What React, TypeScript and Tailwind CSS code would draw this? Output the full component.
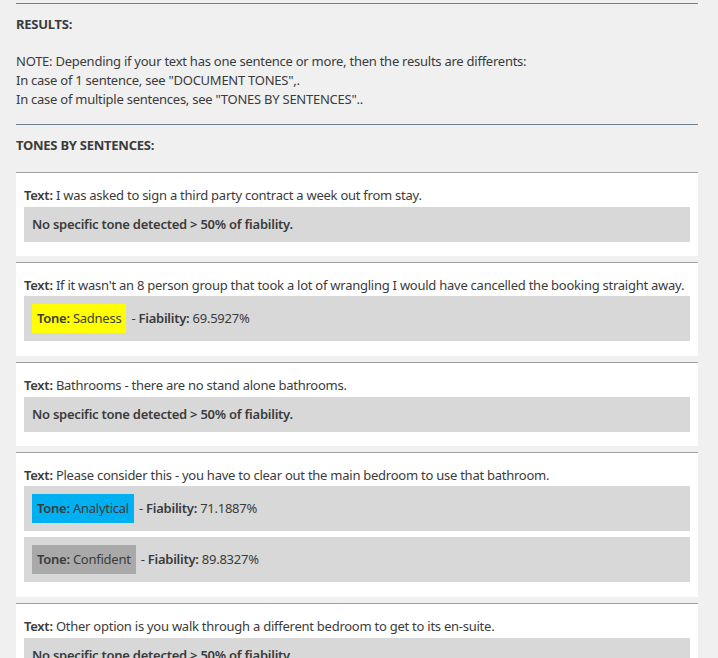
const text = '#3b3b3b'

type Tone = { name: string; score: string; color: string }

const sentences: { text: string; tones: Tone[] }[] = [
  { text: 'I was asked to sign a third party contract a week out from stay.', tones: [] },
  {
    text: "If it wasn't an 8 person group that took a lot of wrangling I would have cancelled the booking straight away.",
    tones: [{ name: 'Sadness', score: '69.5927%', color: 'bg-[#ffff00]' }],
  },
  { text: 'Bathrooms - there are no stand alone bathrooms.', tones: [] },
  {
    text: 'Please consider this - you have to clear out the main bedroom to use that bathroom.',
    tones: [
      { name: 'Analytical', score: '71.1887%', color: 'bg-[#00b0f0]' },
      { name: 'Confident', score: '89.8327%', color: 'bg-[#a9a9a9]' },
    ],
  },
  { text: 'Other option is you walk through a different bedroom to get to its en-suite.', tones: [] },
]

export default function App() {
  return (
    <div
      className="min-h-[658px] overflow-hidden bg-[#f0f0f0] pt-[3px] text-[13px] leading-[19px] tracking-[-0.25px]"
      style={{ fontFamily: '"Segoe UI", "Noto Sans", sans-serif', color: text }}
    >
      <div className="ml-4 w-[682px]">
        <div className="border-t border-[#6e7f94]" />
        <h4 className="mt-[10px] h-5 font-bold leading-[20px]">RESULTS:</h4>
        <div className="mt-[18px]">
          <p className="h-[19px]">NOTE: Depending if your text has one sentence or more, then the results are differents:</p>
          <p className="h-[19px]">In case of 1 sentence, see "DOCUMENT TONES",.</p>
          <p className="h-[19px]">In case of multiple sentences, see "TONES BY SENTENCES"..</p>
        </div>
        <div className="mt-[15px] border-t border-[#6e7f94]" />
        <h4 className="mt-[10px] h-5 font-bold leading-[20px]">TONES BY SENTENCES:</h4>

        <div className="mt-[17px] flex flex-col gap-[6px]">
          {sentences.map((s) =>
            s.tones.length === 0 ? (
              <div key={s.text} className="border-t border-[#a0a0a0] bg-white px-2 pb-[14px] pt-[13px]">
                <p className="mb-[2px] h-[19px] whitespace-nowrap">
                  <span className="font-semibold">Text:</span> {s.text}
                </p>
                <div className="h-[35px] bg-[#d8d8d8] px-2 py-2 font-semibold">
                  No specific tone detected &gt; 50% of fiability.
                </div>
              </div>
            ) : (
              <div key={s.text} className="border-t border-[#a0a0a0] bg-white px-2 pb-[15px] pt-[13px]">
                <p className="mb-[1px] h-[19px] whitespace-nowrap">
                  <span className="font-semibold">Text:</span> {s.text}
                </p>
                <div className="flex flex-col gap-[6px]">
                  {s.tones.map((t) => (
                    <div key={t.name} className="flex h-[45px] items-center bg-[#d8d8d8] px-2">
                      <span className={`${t.color} h-[29px] px-[5px] py-[5px]`}>
                        <span className="font-semibold">Tone:</span> {t.name}
                      </span>
                      <span className="ml-[5px]">
                        - <span className="font-semibold">Fiability:</span> {t.score}
                      </span>
                    </div>
                  ))}
                </div>
              </div>
            ),
          )}
        </div>
      </div>
    </div>
  )
}
